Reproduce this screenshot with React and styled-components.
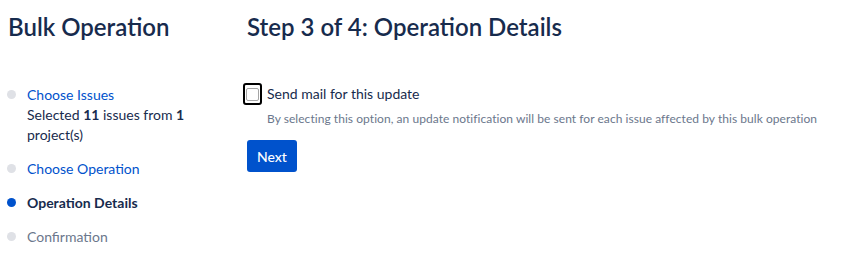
import styled, { createGlobalStyle } from "styled-components";

const GlobalStyle = createGlobalStyle`
  body {
    margin: 0;
    background: #ffffff;
    font-family: "Segoe UI", Lato, "Noto Sans", sans-serif;
    color: #172b4d;
  }
`;

const Page = styled.div`
  display: flex;
  width: 855px;
  height: 273px;
`;

const Sidebar = styled.aside`
  width: 247px;
  flex-shrink: 0;
  padding: 12px 0 0 8px;
  box-sizing: border-box;
`;

const Heading = styled.h1`
  margin: 0;
  font-size: 24px;
  font-weight: 600;
  line-height: 30px;
  color: #172b4d;
`;

const Steps = styled.ol`
  list-style: none;
  margin: 43px 0 0;
  padding: 0;
  display: flex;
  flex-direction: column;
  gap: 14px;
`;

const Step = styled.li`
  position: relative;
  padding-left: 19px;
  font-size: 14px;
  line-height: 20px;
  font-weight: ${(p) => (p.$current ? 700 : 400)};
  color: ${(p) => (p.$muted ? "#6b778c" : "#172b4d")};

  &::before {
    content: "";
    position: absolute;
    left: -1px;
    top: 5px;
    width: 9px;
    height: 9px;
    border-radius: 50%;
    background: ${(p) => (p.$current ? "#0052cc" : "#dfe1e6")};
  }
`;

const StepLink = styled.a`
  color: #0052cc;
  text-decoration: none;
`;

const Main = styled.main`
  flex: 1;
  padding-top: 12px;
`;

const Title = styled.h2`
  margin: 0;
  font-size: 24px;
  font-weight: 600;
  line-height: 30px;
  color: #172b4d;
`;

const CheckRow = styled.label`
  display: flex;
  align-items: center;
  gap: 5px;
  margin: 41px 0 0 -4px;
  font-size: 14px;
  line-height: 20px;
  color: #172b4d;
`;

const Box = styled.span`
  width: 15px;
  height: 18px;
  border: 2px solid #000000;
  border-radius: 3px;
  display: flex;
  align-items: center;
  justify-content: center;

  &::after {
    content: "";
    width: 11px;
    height: 11px;
    border: 1px solid #a5a5a5;
    border-radius: 2px;
    background: #fff;
  }
`;

const Help = styled.p`
  margin: 6px 0 0 20px;
  font-size: 12px;
  line-height: 16px;
  letter-spacing: 0.05px;
  color: #6b778c;
`;

const Button = styled.button`
  margin-top: 13px;
  height: 32px;
  padding: 0 10px;
  border: none;
  border-radius: 3px;
  background: #0052cc;
  color: #ffffff;
  font-family: inherit;
  font-size: 14px;
  font-weight: 500;
  cursor: pointer;
`;

export default function App() {
  return (
    <>
      <GlobalStyle />
      <Page>
        <Sidebar>
          <Heading>Bulk Operation</Heading>
          <Steps>
            <Step>
              <StepLink href="#">Choose Issues</StepLink>
              <div>
                Selected <b>11</b> issues from <b>1</b>
                <br />
                project(s)
              </div>
            </Step>
            <Step>
              <StepLink href="#">Choose Operation</StepLink>
            </Step>
            <Step $current>Operation Details</Step>
            <Step $muted>Confirmation</Step>
          </Steps>
        </Sidebar>
        <Main>
          <Title>Step 3 of 4: Operation Details</Title>
          <CheckRow>
            <Box />
            Send mail for this update
          </CheckRow>
          <Help>
            By selecting this option, an update notification will be sent for each issue affected by this bulk operation
          </Help>
          <Button>Next</Button>
        </Main>
      </Page>
    </>
  );
}
